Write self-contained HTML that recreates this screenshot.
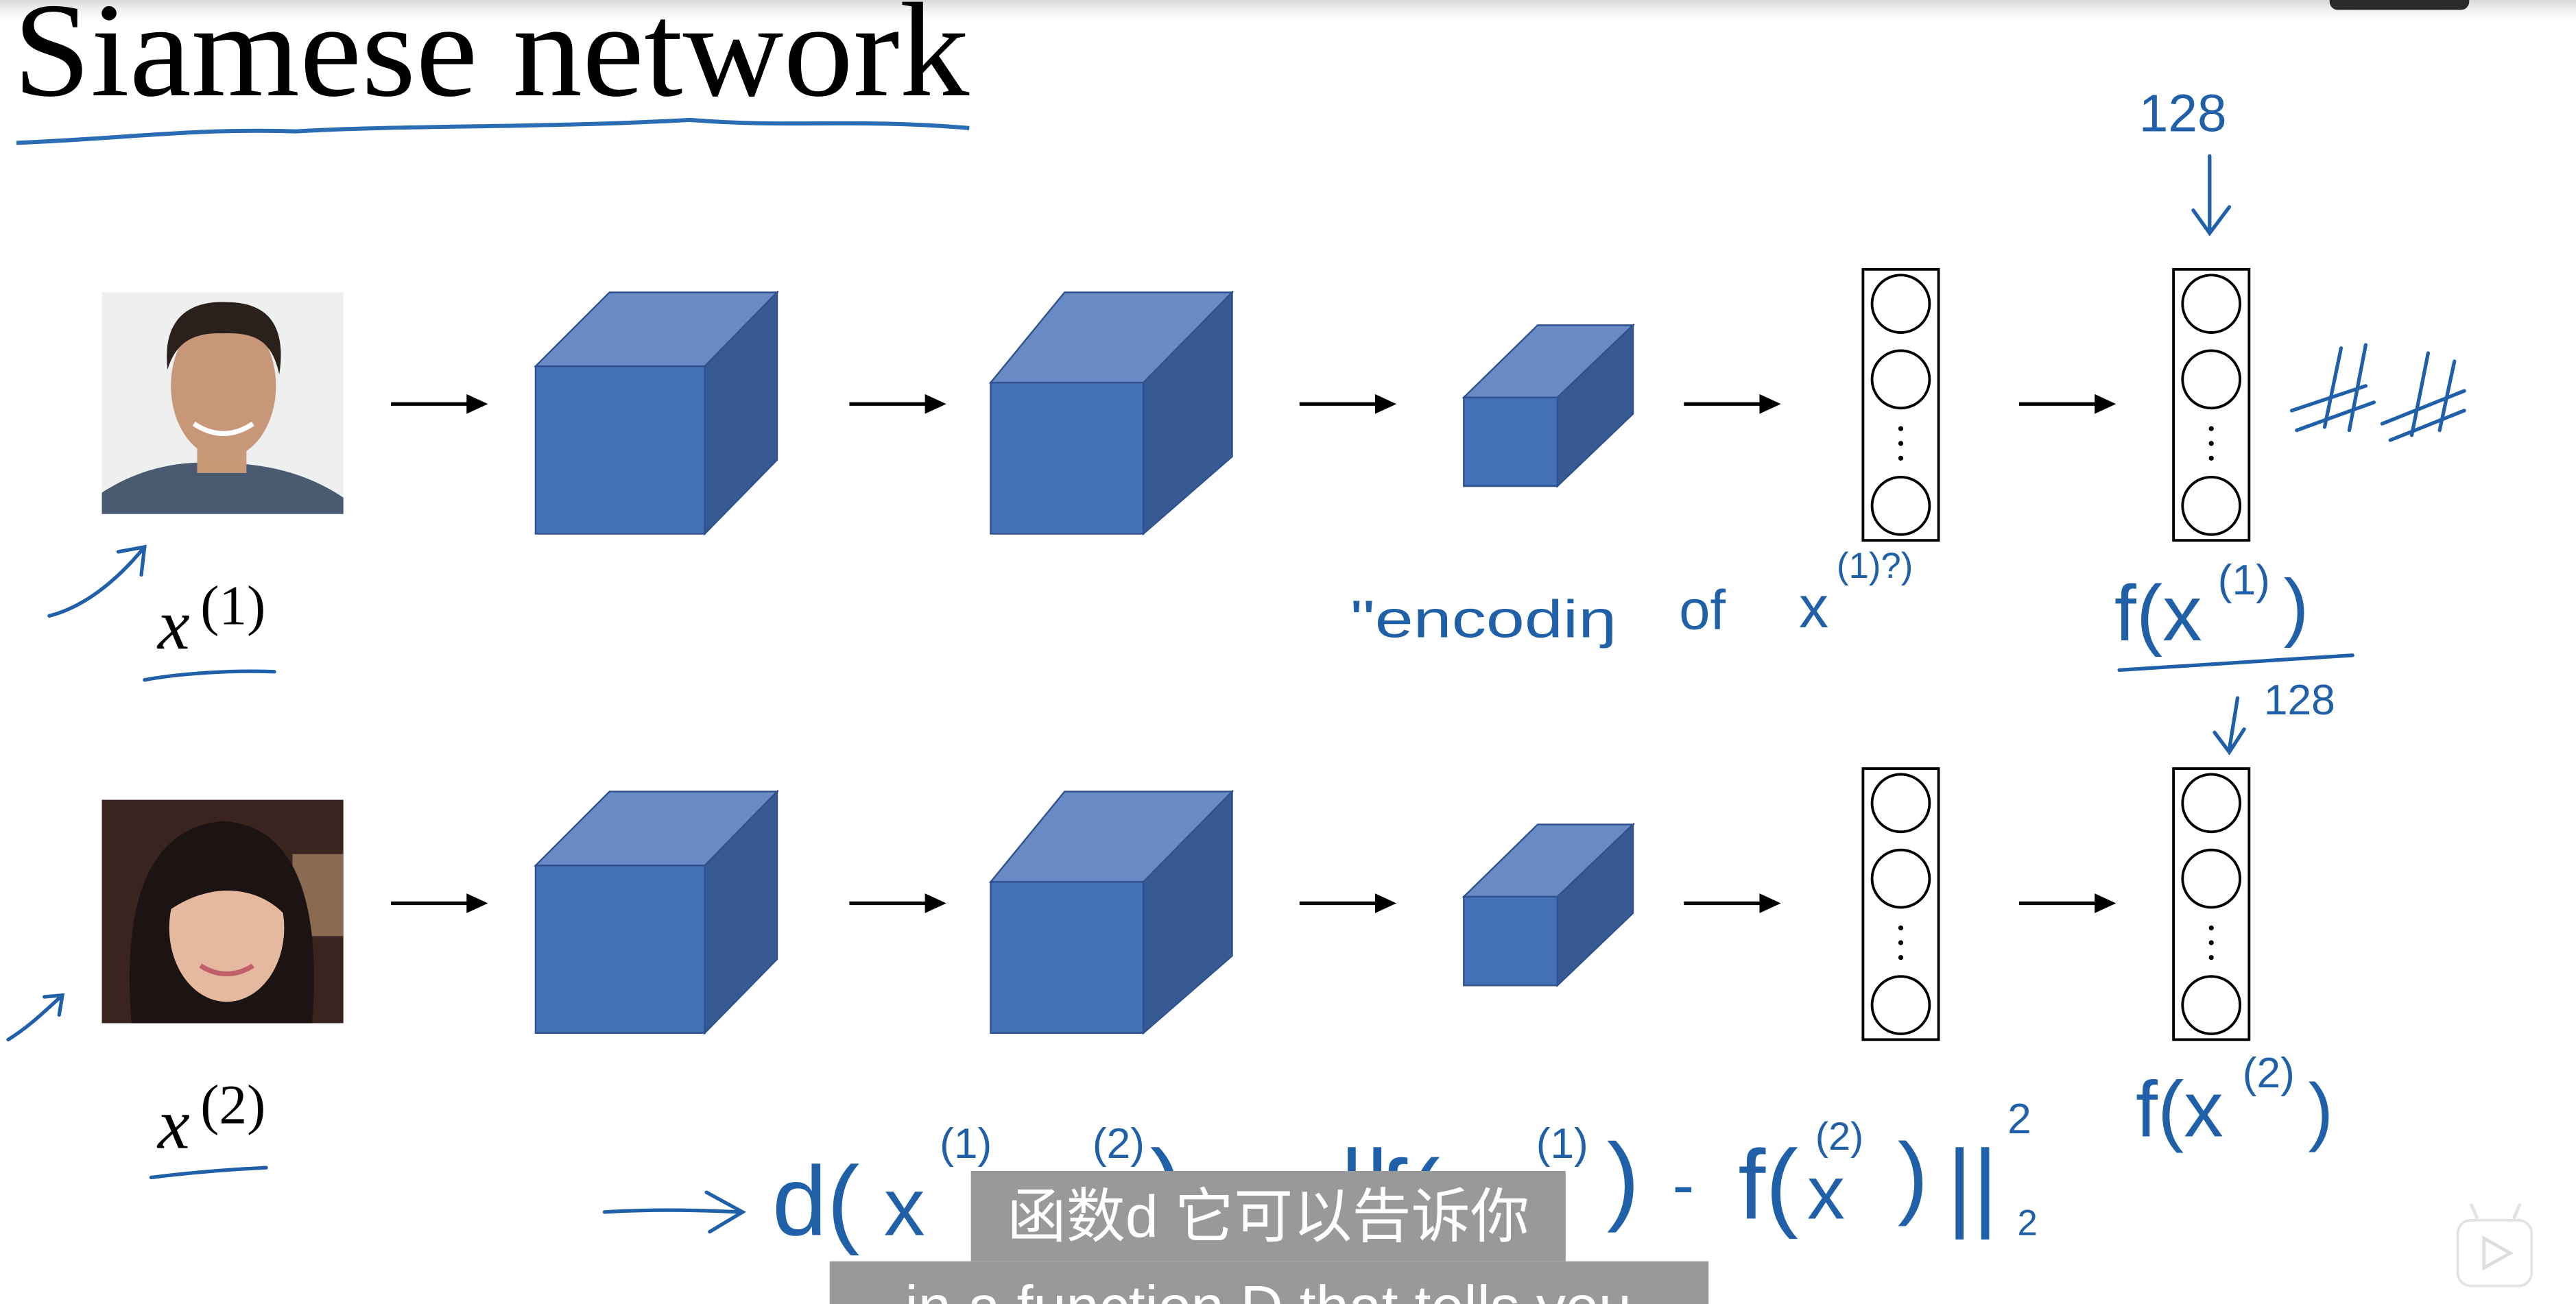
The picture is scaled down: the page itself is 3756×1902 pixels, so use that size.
<!DOCTYPE html>
<html><head><meta charset="utf-8"><style>
html,body{margin:0;padding:0;background:#fff;overflow:hidden}
svg{display:block}
</style></head><body>
<svg width="3756" height="1902" viewBox="0 0 1568 794" preserveAspectRatio="none" xmlns="http://www.w3.org/2000/svg">
<defs>
<linearGradient id="tg" x1="0" y1="0" x2="0" y2="1"><stop offset="0" stop-color="#d8d8d8"/><stop offset="1" stop-color="#fff" stop-opacity="0"/></linearGradient>
<g id="cube1"><polygon points="326,223 371,178 473,178 429,223" fill="#6a8ac6" stroke="#2f528f" stroke-width="1"/><polygon points="429,223 473,178 473,280 429,325" fill="#375a93" stroke="#2f528f" stroke-width="1"/><rect x="326" y="223" width="103" height="102" fill="#4470b8" stroke="#2f528f" stroke-width="1"/></g>
<g id="cube2"><polygon points="603,233 648,178 750,178 696,233" fill="#6a8ac6" stroke="#2f528f"/><polygon points="696,233 750,178 750,278 696,325" fill="#375a93" stroke="#2f528f"/><rect x="603" y="233" width="93" height="92" fill="#4470b8" stroke="#2f528f"/></g>
<g id="cube3"><polygon points="891,242 936,198 994,198 948,242" fill="#6a8ac6" stroke="#2f528f"/><polygon points="948,242 994,198 994,252 948,296" fill="#375a93" stroke="#2f528f"/><rect x="891" y="242" width="57" height="54" fill="#4470b8" stroke="#2f528f"/></g>
<g id="arrows" fill="#000" stroke="#000" stroke-width="2.2">
<line x1="238" y1="246" x2="286" y2="246"/><polygon points="284,240 297,246 284,252" stroke="none"/>
<line x1="517" y1="246" x2="565" y2="246"/><polygon points="563,240 576,246 563,252" stroke="none"/>
<line x1="791" y1="246" x2="839" y2="246"/><polygon points="837,240 850,246 837,252" stroke="none"/>
<line x1="1025" y1="246" x2="1073" y2="246"/><polygon points="1071,240 1084,246 1071,252" stroke="none"/>
<line x1="1229" y1="246" x2="1277" y2="246"/><polygon points="1275,240 1288,246 1275,252" stroke="none"/>
</g>
<g id="vec" fill="#fff" stroke="#000" stroke-width="1.6"><rect x="1134" y="164" width="46" height="165"/><circle cx="1157" cy="185" r="17.5"/><circle cx="1157" cy="231" r="17.5"/><circle cx="1157" cy="308" r="17.5"/><g fill="#000" stroke="none"><circle cx="1157" cy="261" r="1.5"/><circle cx="1157" cy="270" r="1.5"/><circle cx="1157" cy="279" r="1.5"/></g></g>
</defs>
<rect width="1568" height="794" fill="#fff"/>
<rect width="1568" height="16" fill="url(#tg)"/>
<rect x="1418" y="-6" width="85" height="12" rx="5" fill="#2a2a2a"/>
<text x="8" y="58" font-family="Liberation Serif, serif" font-size="82" textLength="582" lengthAdjust="spacingAndGlyphs" fill="#000">Siamese network</text>
<path d="M10,87 C80,84 120,78 180,80 C250,76 330,78 420,73 C480,78 520,72 590,78" fill="none" stroke="#2a6db5" stroke-width="2.5"/>

<!-- faces -->
<rect x="62" y="178" width="147" height="135" fill="#eef0f0"/>
<path d="M62,313 L62,300 C85,285 110,280 135,282 C165,282 190,290 209,303 L209,313 Z" fill="#4a5a70"/>
<rect x="120" y="258" width="30" height="30" fill="#c99a78"/>
<ellipse cx="136" cy="235" rx="32" ry="44" fill="#c8977a"/>
<path d="M102,225 C98,190 120,183 138,184 C160,184 175,195 170,228 C166,210 158,202 136,203 C114,202 106,212 102,225Z" fill="#2a211d"/>
<path d="M118,258 Q136,270 154,258" stroke="#fff" stroke-width="3" fill="none"/>
<rect x="62" y="487" width="147" height="136" fill="#3a2420"/>
<rect x="178" y="520" width="31" height="50" fill="#8a6a50"/>
<path d="M80,623 C75,560 85,505 135,500 C185,502 195,560 190,623 Z" fill="#1c1412"/>
<ellipse cx="138" cy="565" rx="35" ry="45" fill="#e5b8a0"/>
<path d="M102,555 C105,515 130,510 150,512 C170,518 178,540 176,560 C160,540 130,535 102,555Z" fill="#1c1412"/>
<path d="M122,588 Q138,598 154,588" stroke="#c0606a" stroke-width="3" fill="none"/>

<use href="#cube1"/><use href="#cube2"/><use href="#cube3"/>
<use href="#cube1" y="304"/><use href="#cube2" y="304"/><use href="#cube3" y="304"/>
<use href="#arrows"/><use href="#arrows" y="304"/>
<use href="#vec"/><use href="#vec" x="189"/><use href="#vec" y="304"/><use href="#vec" x="189" y="304"/>

<!-- serif labels -->
<text x="96" y="395" font-family="Liberation Serif, serif" font-style="italic" font-size="44" fill="#000">x</text>
<text x="122" y="380" font-family="Liberation Serif, serif" font-size="34" fill="#000">(1)</text>
<text x="96" y="699" font-family="Liberation Serif, serif" font-style="italic" font-size="44" fill="#000">x</text>
<text x="122" y="684" font-family="Liberation Serif, serif" font-size="34" fill="#000">(2)</text>

<!-- handwriting -->
<g fill="none" stroke="#2060a8" stroke-width="2.2" stroke-linecap="round">
<path d="M88,414 C110,410 140,408 167,409"/>
<path d="M92,717 C115,714 140,712 162,711"/>
<path d="M30,375 C50,370 70,355 88,333 M72,336 L88,333 L86,350"/>
<path d="M5,633 C18,625 28,615 38,606 M27,607 L38,606 L36,618"/>
<path d="M1345,95 L1345,140 M1335,128 L1345,142 L1357,126"/>
<path d="M1290,408 C1340,405 1390,402 1432,399"/>
<path d="M1362,425 L1357,456 M1348,446 L1357,458 L1366,444"/>
<path d="M1395,250 L1440,235 M1398,262 L1445,245 M1415,260 L1425,212 M1430,262 L1440,210 M1450,258 L1500,238 M1455,268 L1500,250 M1468,265 L1478,215 M1485,262 L1494,220"/>
<path d="M368,738 C400,736 430,737 450,738 M430,726 L452,738 L432,750"/>
</g>
<g font-family="Liberation Sans, sans-serif" fill="#2060a8">
<text x="1302" y="80" font-size="32">128</text>
<text x="1378" y="435" font-size="26">128</text>
<text x="822" y="388" font-size="32" textLength="162" lengthAdjust="spacingAndGlyphs">"encodiŋ</text>
<text x="1022" y="383" font-size="34">of</text>
<text x="1095" y="382" font-size="36">x</text>
<text x="1118" y="352" font-size="22">(1)?)</text>
<text x="1287" y="390" font-size="48">f(x</text>
<text x="1350" y="362" font-size="26">(1)</text>
<text x="1390" y="385" font-size="46">)</text>
<text x="1300" y="692" font-size="48">f(x</text>
<text x="1365" y="662" font-size="26">(2)</text>
<text x="1405" y="692" font-size="46">)</text>
<!-- formula -->
<text x="470" y="752" font-size="60">d(</text>
<text x="538" y="752" font-size="50">x</text>
<text x="572" y="705" font-size="26">(1)</text>
<text x="610" y="752" font-size="50">,</text>
<text x="632" y="752" font-size="50">x</text>
<text x="665" y="705" font-size="26">(2)</text>
<text x="700" y="742" font-size="60">)</text>
<text x="762" y="745" font-size="40">=</text>
<text x="815" y="742" font-size="60">||</text>
<text x="840" y="748" font-size="60">f(</text>
<text x="890" y="748" font-size="50">x</text>
<text x="935" y="705" font-size="26">(1)</text>
<text x="978" y="738" font-size="60">)</text>
<text x="1018" y="735" font-size="40">-</text>
<text x="1058" y="742" font-size="60">f(</text>
<text x="1100" y="742" font-size="46">x</text>
<text x="1105" y="700" font-size="24">(2)</text>
<text x="1155" y="735" font-size="56">)</text>
<text x="1185" y="742" font-size="60">||</text>
<text x="1222" y="690" font-size="26">2</text>
<text x="1228" y="752" font-size="22">2</text>
</g>

<!-- subtitles -->
<rect x="591" y="713" width="362" height="55" fill="#999"/>
<text x="772" y="753" text-anchor="middle" font-family="Liberation Sans, Noto Sans CJK SC, sans-serif" font-size="36" fill="#fff">函数d 它可以告诉你</text>
<rect x="505" y="768" width="535" height="30" fill="#999"/>
<text x="772" y="808" text-anchor="middle" font-family="Liberation Sans, sans-serif" font-size="36" fill="#fff">in a function D that tells you</text>

<!-- bottom-right icon -->
<rect x="1496" y="743" width="45" height="40" rx="8" fill="#fff" stroke="#e2e2e2" stroke-width="1.5"/>
<path d="M1508,742 L1504,733 M1530,742 L1534,733" stroke="#e2e2e2" stroke-width="2"/>
<path d="M1512,754 L1528,763 L1512,772 Z" fill="none" stroke="#ddd" stroke-width="2"/>
</svg>
</body></html>
